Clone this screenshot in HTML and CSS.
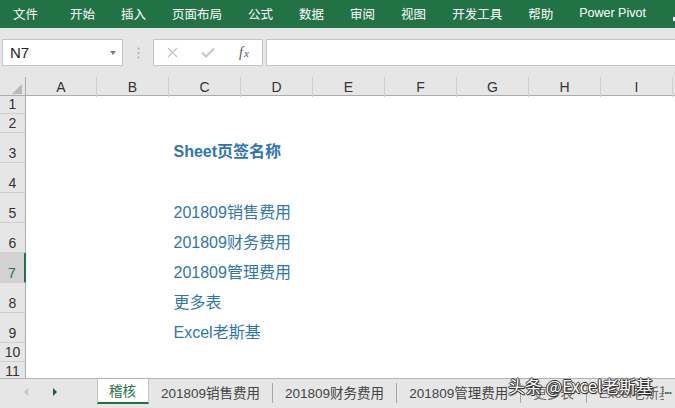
FILE: index.html
```html
<!DOCTYPE html>
<html lang="zh-CN">
<head>
<meta charset="utf-8">
<title>Excel</title>
<link rel="stylesheet" href="styles.css">
</head>
<body>
<div class="ribbon">
  <span class="rt first">文件</span>
  <span class="rt">开始</span>
  <span class="rt">插入</span>
  <span class="rt">页面布局</span>
  <span class="rt">公式</span>
  <span class="rt">数据</span>
  <span class="rt">审阅</span>
  <span class="rt">视图</span>
  <span class="rt">开发工具</span>
  <span class="rt">帮助</span>
  <span class="rt latin">Power Pivot</span>
  <span class="bulb"></span>
</div>

<div class="fbar">
  <div class="namebox"><span>N7</span><span class="dd"></span></div>
  <div class="grip">
    <svg width="3" height="12" viewBox="0 0 3 12"><circle cx="1.5" cy="1.5" r="1" fill="#a8a8a8"/><circle cx="1.5" cy="6" r="1" fill="#a8a8a8"/><circle cx="1.5" cy="10.5" r="1" fill="#a8a8a8"/></svg>
  </div>
  <div class="fxbox">
    <span class="fxi">
      <svg width="11" height="11" viewBox="0 0 11 11"><path d="M1 1 L10 10 M10 1 L1 10" stroke="#c3c3c3" stroke-width="1.3" fill="none"/></svg>
    </span>
    <span class="fxi">
      <svg width="14" height="11" viewBox="0 0 14 11"><path d="M1 5.5 L5 9.5 L13 1.5" stroke="#c6c6c6" stroke-width="2" fill="none"/></svg>
    </span>
    <span class="fxi fx"><span class="f">f</span><span class="x">x</span></span>
  </div>
  <div class="finput"></div>
</div>

<div class="sheet">
  <div class="colheads">
    <div class="corner"><span class="tri"></span></div>
    <div class="ch">A</div>
    <div class="ch">B</div>
    <div class="ch">C</div>
    <div class="ch">D</div>
    <div class="ch">E</div>
    <div class="ch">F</div>
    <div class="ch">G</div>
    <div class="ch">H</div>
    <div class="ch">I</div>
    <div class="ch last"></div>
  </div>
  <div class="row r18"><div class="rh">1</div></div>
  <div class="row r19"><div class="rh">2</div></div>
  <div class="row r30"><div class="rh">3</div><div class="txt title">Sheet页签名称</div></div>
  <div class="row r30"><div class="rh">4</div></div>
  <div class="row r30"><div class="rh">5</div><div class="txt">201809销售费用</div></div>
  <div class="row r30"><div class="rh">6</div><div class="txt">201809财务费用</div></div>
  <div class="row r30"><div class="rh sel">7</div><div class="txt">201809管理费用</div></div>
  <div class="row r30"><div class="rh">8</div><div class="txt">更多表</div></div>
  <div class="row r30"><div class="rh">9</div><div class="txt">Excel老斯基</div></div>
  <div class="row r19"><div class="rh">10</div></div>
  <div class="row r19"><div class="rh">11</div></div>
</div>

<div class="tabbar">
  <div class="nav"><span class="arr-l"></span><span class="arr-r"></span></div>
  <div class="tabs">
    <div class="tab active">稽核</div>
    <div class="tab">201809销售费用</div>
    <div class="tab">201809财务费用</div>
    <div class="tab">201809管理费用</div>
    <div class="tab hidden-under">更多表</div>
    <div class="tab hidden-under">Excel老斯基</div>
  </div>
  <div class="more">...</div>
</div>

<div class="watermark">头条 @Excel老斯基</div>
</body>
</html>
```

FILE: styles.css
```css
* { box-sizing: border-box; }
html, body { margin: 0; padding: 0; }
body {
  width: 675px;
  height: 408px;
  overflow: hidden;
  position: relative;
  background: #e6e6e6;
  font-family: "Liberation Sans", "Noto Sans CJK SC", sans-serif;
}

/* ribbon */
.ribbon {
  height: 28px;
  background: #217346;
  color: #fff;
  display: flex;
  align-items: center;
  gap: 26px;
  padding: 0 0 2px 13px;
  font-family: "Noto Sans CJK SC", "Liberation Sans", sans-serif;
  font-size: 12.5px;
  white-space: nowrap;
  overflow: hidden;
}
.ribbon .first { margin-right: 6px; }
.ribbon .latin { font-family: "Liberation Sans", sans-serif; }
.bulb {
  flex: none;
  width: 2px;
  height: 4px;
  margin-top: 12px;
  margin-left: 1px;
  background: #fff;
}

/* formula bar */
.fbar {
  height: 49px;
  display: flex;
  align-items: flex-start;
  padding: 11px 0 0 2px;
}
.namebox {
  width: 121px;
  height: 27px;
  background: #fff;
  border: 1px solid #c6c6c6;
  display: flex;
  align-items: center;
  padding-left: 7px;
  font-size: 15px;
  color: #222;
}
.dd {
  margin-left: auto;
  margin-right: 6px;
  width: 0;
  height: 0;
  border-left: 3.5px solid transparent;
  border-right: 3.5px solid transparent;
  border-top: 4px solid #7a7a7a;
}
.grip {
  width: 30px;
  height: 27px;
  display: flex;
  align-items: center;
  justify-content: center;
}
.fxbox {
  width: 110px;
  height: 27px;
  background: #fff;
  border: 1px solid #c6c6c6;
  display: flex;
  align-items: center;
}
.fxi {
  width: 36px;
  display: flex;
  justify-content: center;
  align-items: center;
}
.fx {
  font-family: "Liberation Serif", serif;
  font-style: italic;
  color: #555;
  font-size: 14px;
  align-items: baseline;
}
.fx .x { font-size: 11px; margin-left: 1px; }
.finput {
  flex: 1;
  margin-left: 3px;
  height: 27px;
  background: #fff;
  border: 1px solid #c6c6c6;
  border-right: none;
}

/* sheet */
.sheet {
  height: 301px;
  overflow: hidden;
  background: #fff;
}
.colheads {
  display: grid;
  grid-template-columns: 26px 71px repeat(8, 72px) 1fr;
  height: 19px;
  background: #e6e6e6;
  border-bottom: 1px solid #ababab;
}
.corner {
  border-right: 1px solid #ababab;
  position: relative;
}
.tri {
  position: absolute;
  right: 3px;
  bottom: 3px;
  width: 0;
  height: 0;
  border-left: 10px solid transparent;
  border-bottom: 10px solid #b9b9b9;
}
.ch {
  border-right: 1px solid #cfcfcf;
  text-align: center;
  font-size: 14px;
  line-height: 19px;
  padding-top: 1px;
  color: #333;
}
.ch.last { border-right: none; }

.row {
  display: grid;
  grid-template-columns: 26px 143px 1fr;
}
.r18 { height: 18px; }
.r19 { height: 19px; }
.r30 { height: 30px; }
.rh {
  grid-column: 1;
  background: #e6e6e6;
  border-right: 1px solid #ababab;
  border-bottom: 1px solid #cfcfcf;
  display: flex;
  align-items: flex-end;
  justify-content: center;
  font-size: 14px;
  line-height: 16px;
  padding-bottom: 1px;
  color: #333;
}
.rh.sel {
  background: #d2d2d2;
  color: #217346;
  border-right: 2px solid #217346;
}
.txt {
  grid-column: 3;
  display: flex;
  align-items: flex-end;
  padding-left: 4.5px;
  font-size: 16px;
  line-height: 20px;
  color: #2e75b6;
  white-space: nowrap;
}
.txt.title { font-weight: bold; padding-bottom: 1px; }

/* sheet tabs */
.tabbar {
  height: 30px;
  border-top: 1px solid #b4b4b4;
  background: #e6e6e6;
  display: flex;
  align-items: flex-start;
}
.nav {
  width: 97px;
  height: 25px;
  display: flex;
  align-items: center;
  flex: none;
}
.arr-l {
  margin-left: 24px;
  width: 0;
  height: 0;
  border-top: 4px solid transparent;
  border-bottom: 4px solid transparent;
  border-right: 4px solid #c4c4c4;
}
.arr-r {
  margin-left: 25px;
  width: 0;
  height: 0;
  border-top: 4px solid transparent;
  border-bottom: 4px solid transparent;
  border-left: 4px solid #1d5e37;
}
.tabs {
  flex: 1;
  min-width: 0;
  display: flex;
  overflow: hidden;
  white-space: nowrap;
}
.tab {
  flex: none;
  margin-top: 4px;
  height: 20px;
  display: flex;
  align-items: center;
  padding: 0 12px 3px;
  border-right: 1px solid #a6a6a6;
  font-size: 13.5px;
  color: #444;
}
.tab.active {
  margin-top: -1px;
  height: 26px;
  padding: 0 12px 1px 11px;
  background: #fff;
  border-left: 1px solid #c6c6c6;
  border-right: 1px solid #c6c6c6;
  border-bottom: 2px solid #217346;
  color: #217346;
}
.tab.hidden-under { color: #6a6a6a; }
.more {
  flex: none;
  width: 11px;
  height: 25px;
  color: #217346;
  font-size: 12px;
  font-weight: bold;
  line-height: 22px;
  overflow: hidden;
  letter-spacing: -1px;
}

.watermark {
  position: absolute;
  left: 508px;
  top: 376px;
  font-family: "Noto Sans CJK SC", "Liberation Sans", sans-serif;
  font-size: 17px;
  line-height: 20px;
  color: #fff;
  white-space: nowrap;
  text-shadow: 1px 0 0 #333, -1px 0 0 #333, 0 1px 0 #333, 0 -1px 0 #333, 1px 1px 1px #222;
}
```
